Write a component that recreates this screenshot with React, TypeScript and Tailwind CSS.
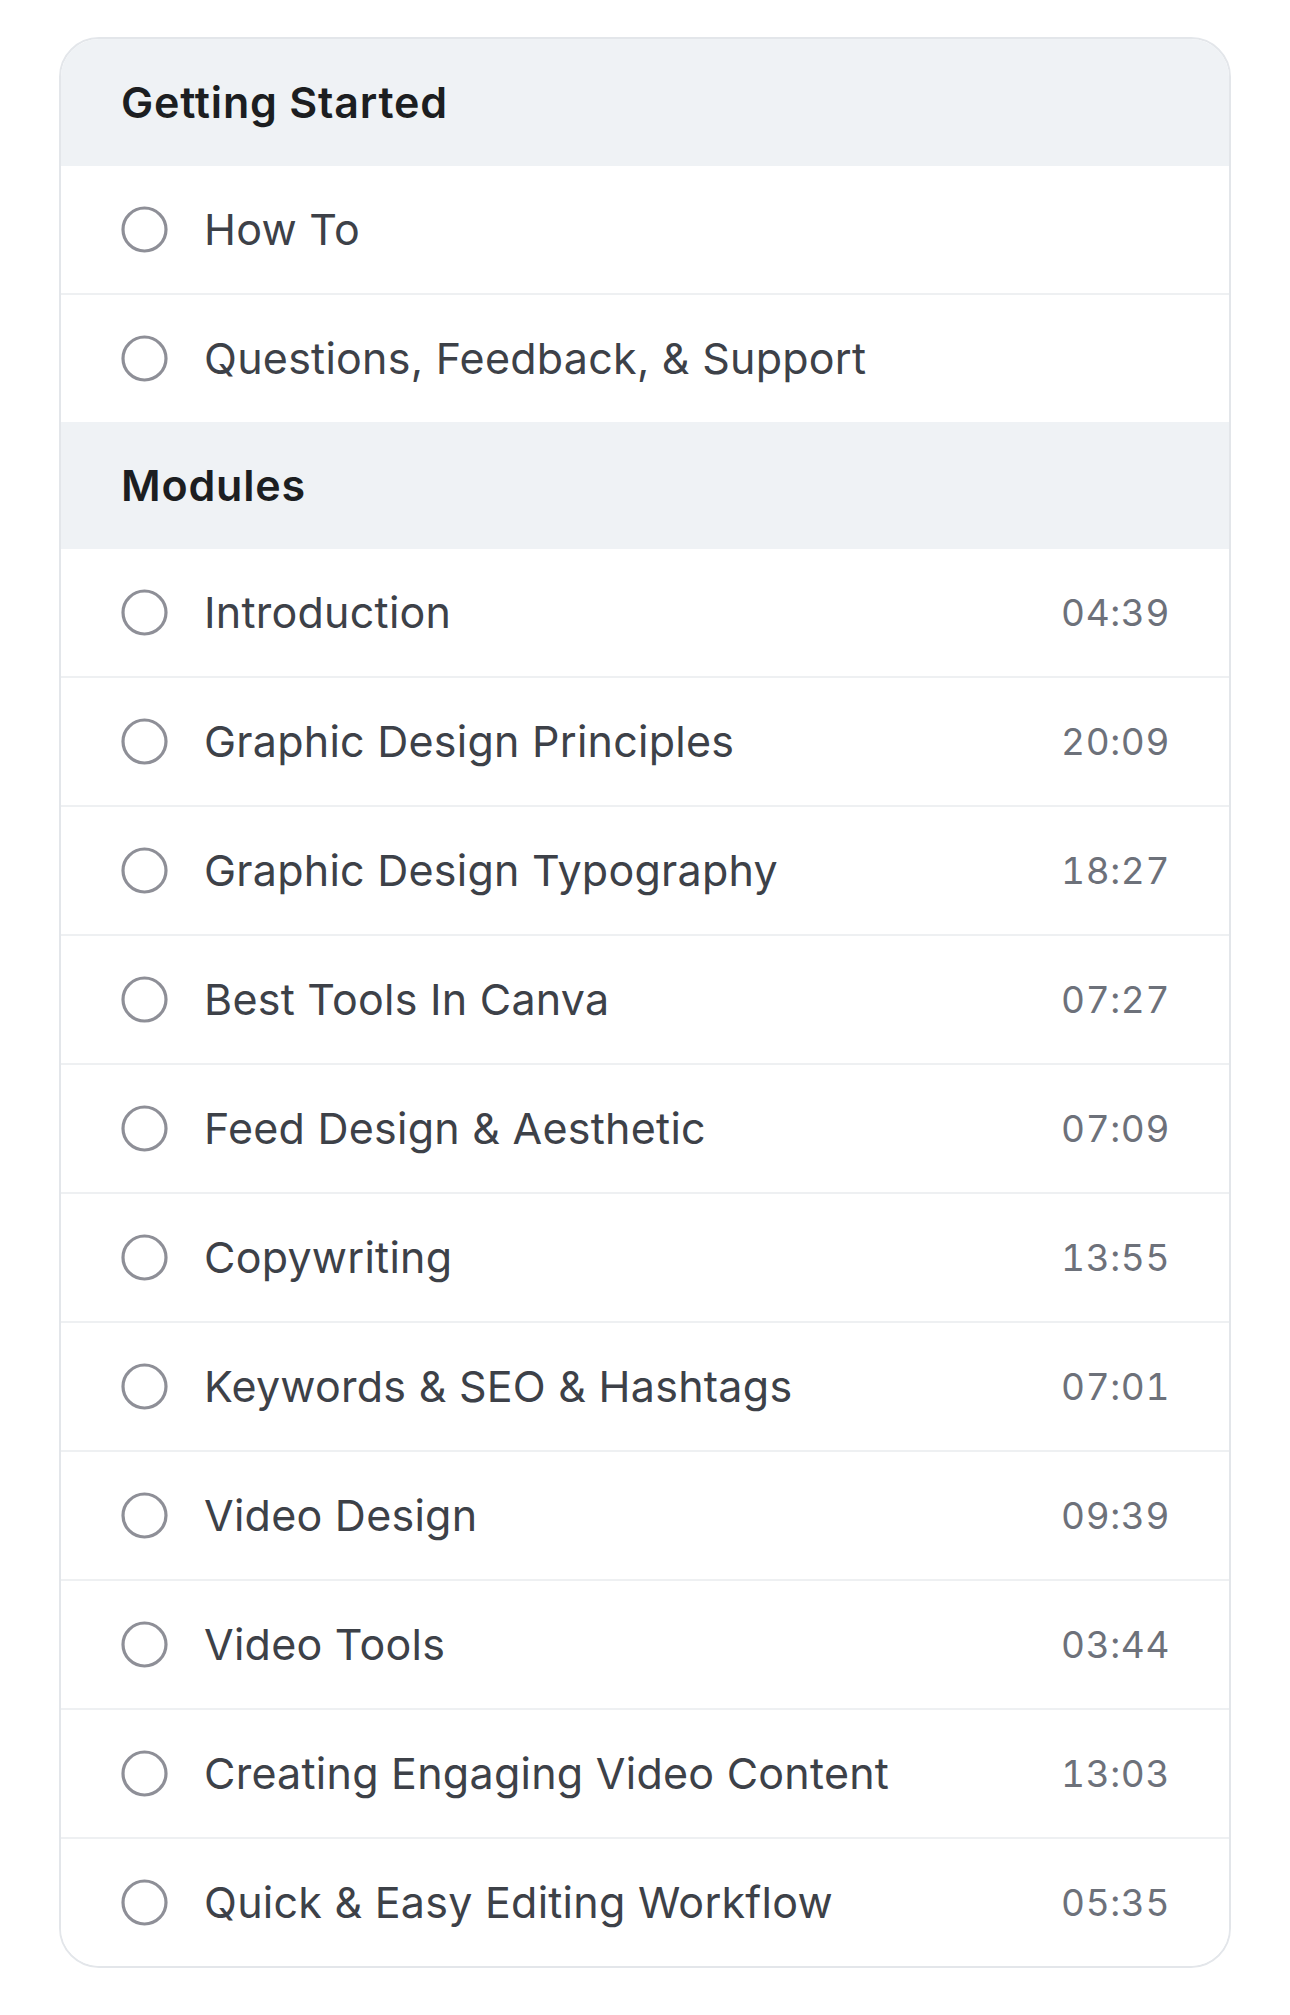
import React from "react";

type Lesson = { title: string; duration?: string };
type Section = { heading: string; lessons: Lesson[] };

const sections: Section[] = [
  {
    heading: "Getting Started",
    lessons: [{ title: "How To" }, { title: "Questions, Feedback, & Support" }],
  },
  {
    heading: "Modules",
    lessons: [
      { title: "Introduction", duration: "04:39" },
      { title: "Graphic Design Principles", duration: "20:09" },
      { title: "Graphic Design Typography", duration: "18:27" },
      { title: "Best Tools In Canva", duration: "07:27" },
      { title: "Feed Design & Aesthetic", duration: "07:09" },
      { title: "Copywriting", duration: "13:55" },
      { title: "Keywords & SEO & Hashtags", duration: "07:01" },
      { title: "Video Design", duration: "09:39" },
      { title: "Video Tools", duration: "03:44" },
      { title: "Creating Engaging Video Content", duration: "13:03" },
      { title: "Quick & Easy Editing Workflow", duration: "05:35" },
    ],
  },
];

// Empty progress ring shown before each lesson
const Ring = () => (
  <svg width="47" height="47" viewBox="0 0 47 47" className="shrink-0">
    <circle cx="23.5" cy="23.5" r="21.5" fill="none" stroke="#8e8f97" strokeWidth="3.2" />
  </svg>
);

const LessonRow = ({ lesson, first }: { lesson: Lesson; first: boolean }) => (
  <div
    className={`flex items-center pl-[60px] pr-[59px] bg-white ${
      first ? "h-[127px]" : "h-[129px] border-t-2 border-[#eef0f2]"
    }`}
  >
    <Ring />
    <span className="ml-[36px] flex-1 text-[43px] tracking-[0.25px] text-[#3d4148]">{lesson.title}</span>
    {lesson.duration && (
      <span className="text-[37px] tabular-nums tracking-[0.6px] text-[#6d717a]">{lesson.duration}</span>
    )}
  </div>
);

export default function App() {
  return (
    <div className="min-h-screen bg-white pt-[37px] pb-[49px] px-[59px] font-['Inter','Noto_Sans',sans-serif]">
      <div className="overflow-hidden rounded-[40px] border-2 border-[#e3e6ea]">
        {sections.map((section) => (
          <div key={section.heading}>
            <div className="flex h-[127px] items-center bg-[#eff2f5] px-[60px]">
              <h2 className="text-[43px] font-semibold tracking-[0.8px] text-[#1c1e21]">{section.heading}</h2>
            </div>
            {section.lessons.map((lesson, i) => (
              <LessonRow key={lesson.title} lesson={lesson} first={i === 0} />
            ))}
          </div>
        ))}
      </div>
    </div>
  );
}
